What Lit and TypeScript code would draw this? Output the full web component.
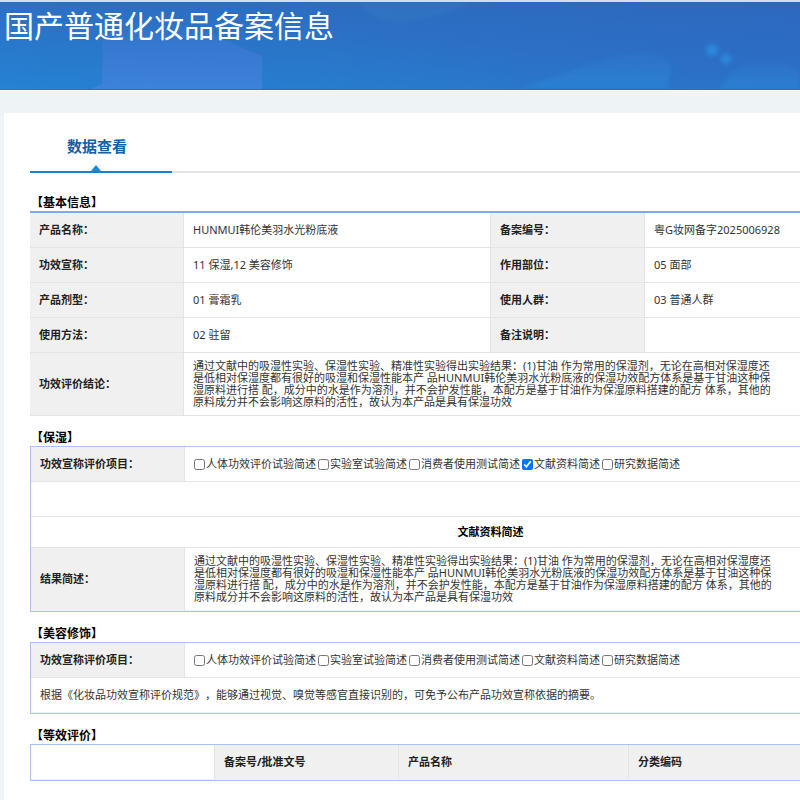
import { LitElement, html, css, svg } from "lit";
import { customElement, property } from "lit/decorators.js";

const BASIC: [string, string, string, string][] = [
  ["产品名称：", "HUNMUI韩伦美羽水光粉底液", "备案编号：", "粤G妆网备字2025006928"],
  ["功效宣称：", "11 保湿,12 美容修饰", "作用部位：", "05 面部"],
  ["产品剂型：", "01 膏霜乳", "使用人群：", "03 普通人群"],
  ["使用方法：", "02 驻留", "备注说明：", ""],
];

const CONCLUSION = [
  "通过文献中的吸湿性实验、保湿性实验、精准性实验得出实验结果：(1)甘油 作为常用的保湿剂，无论在高相对保湿度还",
  "是低相对保湿度都有很好的吸湿和保湿性能本产 品HUNMUI韩伦美羽水光粉底液的保湿功效配方体系是基于甘油这种保",
  "湿原料进行搭 配，成分中的水是作为溶剂，并不会护发性能，本配方是基于甘油作为保湿原料搭建的配方 体系，其他的",
  "原料成分并不会影响这原料的活性，故认为本产品是具有保湿功效",
].join("\n");

const ITEMS = [
  "人体功效评价试验简述",
  "实验室试验简述",
  "消费者使用测试简述",
  "文献资料简述",
  "研究数据简述",
];

@customElement("evaluation-items")
class EvaluationItems extends LitElement {
  @property() checked = "";

  static styles = css`
    :host { display: flex; gap: 2px; white-space: nowrap; }
    label { display: flex; align-items: center; gap: 1px; }
    input { width: 11px; height: 11px; margin: 0; }
  `;

  render() {
    return ITEMS.map(
      (name) => html`<label><input type="checkbox" .checked=${name === this.checked} />${name}</label>`
    );
  }
}

@customElement("page-banner")
class PageBanner extends LitElement {
  static styles = css`
    :host {
      display: block;
      position: relative;
      height: 88px;
      overflow: hidden;
      border-top: 2px solid #d5dde6;
      background: linear-gradient(184deg, #2c68ba 0%, #2b71c5 45%, #2582d3 100%);
    }
    .art { position: absolute; inset: 0; width: 100%; height: 100%; }
    h1 {
      position: relative;
      margin: 0;
      padding: 4px 4px 0;
      color: #fff;
      font-size: 30px;
      line-height: 40px;
      font-weight: 400;
      white-space: nowrap;
    }
  `;

  render() {
    return html`
      ${svg`<svg class="art" viewBox="0 0 800 88" preserveAspectRatio="none" aria-hidden="true">
        <defs>
          <linearGradient id="v" x1="0" y1="0" x2="0" y2="1">
            <stop offset="0" stop-color="#3d7ad6" stop-opacity="0" />
            <stop offset=".4" stop-color="#3d7ad6" stop-opacity=".7" />
            <stop offset="1" stop-color="#3f82dc" stop-opacity=".9" />
          </linearGradient>
          <linearGradient id="r" x1="0" y1="0" x2="1" y2="0">
            <stop offset=".4" stop-color="#2f68c6" stop-opacity="0" />
            <stop offset="1" stop-color="#2f68c6" stop-opacity=".35" />
          </linearGradient>
          <linearGradient id="h" x1="0" y1="0" x2="0" y2="1">
            <stop offset="0" stop-color="#2f80d2" stop-opacity=".2" />
            <stop offset="1" stop-color="#2a83d6" stop-opacity=".8" />
          </linearGradient>
          <filter id="soft"><feGaussianBlur stdDeviation="2" /></filter>
        </defs>
        <rect width="800" height="88" fill="url(#r)" />
        <path d="M103 20h80l79 34v34H88l14-6z" fill="url(#v)" />
        <path d="M360 0h112q-30 14-60 19-40 5-52-19z" fill="#3b80c8" opacity=".3" filter="url(#soft)" />
        <path d="M520 88q60-24 100-34 46-10 52 14l-6 20z" fill="url(#h)" filter="url(#soft)" />
        <path d="M720 88q10-26 44-28 26 0 36 12v16z" fill="url(#h)" filter="url(#soft)" />
        <g fill="#2a88dc" filter="url(#soft)">
          <circle cx="712" cy="48" r="6" />
          <circle cx="726" cy="57" r="5" />
        </g>
        <rect y="87" width="800" height="1" fill="#2173cb" />
      </svg>`}
      <h1>国产普通化妆品备案信息</h1>
    `;
  }
}

@customElement("app-root")
class AppRoot extends LitElement {
  static styles = css`
    :host {
      display: flex;
      flex-direction: column;
      min-height: 100vh;
      overflow: hidden;
      background: #eef3f6;
      color: #333;
      font-family: "Noto Sans", "Noto Sans CJK SC", sans-serif;
      font-size: 11px;
      line-height: 12px;
      text-spacing-trim: space-all;
    }
    main {
      flex: 1;
      margin: 22px 0 0 4px;
      padding-left: 26px;
      background: #fff;
    }
    .gap { border-top: 1px solid #fff; }
    nav {
      height: 58px;
      min-width: 922px;
      border-bottom: 2px solid #e4e4e4;
    }
    .tab {
      position: relative;
      box-sizing: border-box;
      display: block;
      width: 142px;
      height: 60px;
      padding: 8px 0 0 37px;
      border: 0;
      border-bottom: 2px solid #1583d2;
      background: none;
      color: #1460a6;
      font-family: inherit;
      font-size: 15px;
      line-height: 20px;
      font-weight: 700;
      text-align: left;
    }
    .tab::after {
      content: "";
      position: absolute;
      left: 61px;
      bottom: 0;
      border: 5px solid transparent;
      border-top: 0;
      border-bottom: 6px solid #1b86d3;
    }
    h2 {
      margin: 14px 0 0;
      padding-left: 1px;
      color: #000;
      font-size: 12px;
      line-height: 16px;
      font-weight: 700;
    }
    nav + h2 { margin-top: 22px; }
    table {
      width: 100%;
      min-width: 922px;
      table-layout: fixed;
      border-collapse: separate;
      border-spacing: 0;
      border: 1px solid #a9c4ec;
    }
    table.plain { border: 0; border-top: 2px solid #7fabe6; }
    th, td {
      box-sizing: border-box;
      height: 35px;
      padding: 0 9px;
      border-bottom: 1px solid #e4e4e4;
      border-right: 1px solid #e4e4e4;
      text-align: left;
      font-weight: 400;
    }
    table.framed tr:last-child > * { border-bottom-color: #eef1f6; }
    th { background: #f0f0f0; color: #222; font-weight: 700; }
    .label { width: 154px; }
    .fifth { width: 20%; }
    .quarter { width: 25%; }
    .tall > * { height: 63px; }
    .caption th {
      height: 31px;
      background: #fff;
      color: #000;
      text-align: center;
    }
    .text { white-space: pre; }
  `;

  render() {
    return html`
      <page-banner></page-banner>
      <div class="gap"></div>
      <main>
        <nav><button class="tab" type="button">数据查看</button></nav>

        <h2>【基本信息】</h2>
        <table class="plain">
          <colgroup><col class="label" /><col /><col class="label" /><col /></colgroup>
          ${BASIC.map(
            ([a, b, c, d]) => html`<tr>
              <th scope="row">${a}</th><td>${b}</td>
              <th scope="row">${c}</th><td>${d}</td>
            </tr>`
          )}
          <tr class="tall">
            <th scope="row">功效评价结论：</th>
            <td class="text" colspan="3">${CONCLUSION}</td>
          </tr>
        </table>

        <h2>【保湿】</h2>
        <table class="framed">
          <colgroup><col class="label" /><col /></colgroup>
          <tr>
            <th scope="row">功效宣称评价项目：</th>
            <td><evaluation-items checked="文献资料简述"></evaluation-items></td>
          </tr>
          <tr><td colspan="2"></td></tr>
          <tr class="caption"><th colspan="2">文献资料简述</th></tr>
          <tr class="tall">
            <th scope="row">结果简述：</th>
            <td class="text">${CONCLUSION}</td>
          </tr>
        </table>

        <h2>【美容修饰】</h2>
        <table class="framed">
          <colgroup><col class="label" /><col /></colgroup>
          <tr>
            <th scope="row">功效宣称评价项目：</th>
            <td><evaluation-items></evaluation-items></td>
          </tr>
          <tr>
            <td colspan="2">根据《化妆品功效宣称评价规范》，能够通过视觉、嗅觉等感官直接识别的，可免予公布产品功效宣称依据的摘要。</td>
          </tr>
        </table>

        <h2>【等效评价】</h2>
        <table class="framed">
          <colgroup><col class="fifth" /><col class="fifth" /><col class="quarter" /><col /></colgroup>
          <tr>
            <td></td>
            <th scope="col">备案号/批准文号</th>
            <th scope="col">产品名称</th>
            <th scope="col">分类编码</th>
          </tr>
        </table>
      </main>
    `;
  }
}
